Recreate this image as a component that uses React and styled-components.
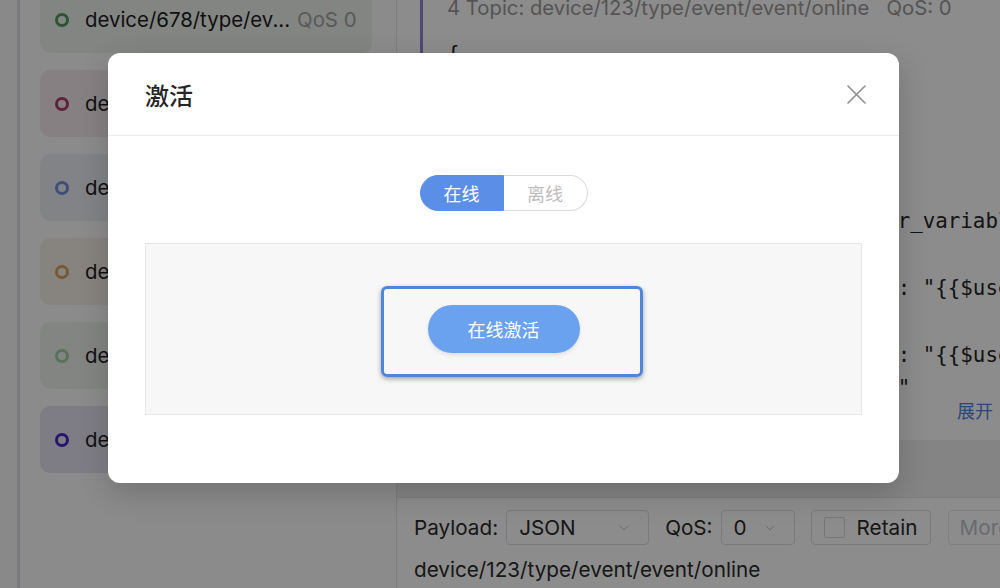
import React from "react";
import styled, { createGlobalStyle } from "styled-components";
import { ChevronDown } from "lucide-react";

const GlobalStyle = createGlobalStyle`
  html, body { margin: 0; padding: 0; }
  body {
    width: 1000px;
    height: 588px;
    overflow: hidden;
    background: #fff;
    font-family: Inter, "Noto Sans CJK SC", sans-serif;
  }
  * { box-sizing: border-box; }
`;

const Page = styled.div`
  position: relative;
  display: flex;
  width: 1000px;
  height: 588px;
  overflow: hidden;
  background: #fff;
`;

const NavStrip = styled.div`
  flex: none;
  width: 20px;
  background: #f9f9f9;
  border-right: 3px solid #dedcec;
`;

const Sidebar = styled.aside`
  flex: none;
  width: 377px;
  padding: 0 24px 0 20px;
  background: #fdfdfd;
  border-right: 1px solid #e3e3e3;
  overflow: hidden;
`;

const CardList = styled.div`
  display: flex;
  flex-direction: column;
  gap: 17px;
  margin-top: -14px;
`;

const SubCard = styled.div`
  display: flex;
  align-items: center;
  gap: 16px;
  height: 67px;
  padding-left: 15px;
  border-radius: 10px;
  background: ${(p) => p.$bg};
  white-space: nowrap;
  overflow: hidden;
`;

const Dot = styled.span`
  flex: none;
  width: 14px;
  height: 14px;
  border-radius: 50%;
  border: 3px solid ${(p) => p.$color};
`;

const SubTopic = styled.span`
  font-size: 20.4px;
  color: #1c1c1c;
`;

const SubQos = styled.span`
  margin-left: 7px;
  color: #a3a3a3;
`;

const Main = styled.main`
  flex: 1;
  display: flex;
  flex-direction: column;
  min-width: 0;
  overflow: hidden;
`;

const MessageList = styled.div`
  flex: 1;
  display: flex;
  flex-direction: column;
  min-height: 0;
`;

const MessageCard = styled.div`
  flex: none;
  height: 448px;
  margin-top: -8px;
  margin-left: 23px;
  padding-left: 24px;
  border-left: 3px solid #8f86d4;
  background: #fff;
  display: flex;
  flex-direction: column;
  overflow: hidden;
`;

const TopicLine = styled.div`
  font-size: 20.3px;
  line-height: 32px;
  color: #9a9a9a;
  white-space: pre;
`;

const Payload = styled.pre`
  margin: 14px 0 0;
  height: 349px;
  overflow: hidden;
  font-family: "DejaVu Sans Mono", "Liberation Mono", monospace;
  font-size: 20.8px;
  line-height: 33.4px;
  color: #262626;
  white-space: pre;
`;

const ExpandRow = styled.div`
  flex: 1;
  display: flex;
  justify-content: flex-end;
  align-items: flex-start;
  padding: 11px 7px 0 0;
`;

const ExpandLink = styled.span`
  font-family: "Noto Sans CJK SC", sans-serif;
  font-size: 18px;
  line-height: 24px;
  color: #4f7fe6;
`;

const ListBand = styled.div`
  flex: 1;
  background: #f1f1f1;
`;

const InputArea = styled.div`
  flex: none;
  height: 91px;
  padding: 12px 0 0 17px;
  border-top: 1px solid #e2e2e2;
  background: #fff;
`;

const ControlRow = styled.div`
  display: flex;
  align-items: center;
  height: 35px;
  white-space: nowrap;
`;

const FieldLabel = styled.span`
  font-size: 20.7px;
  color: #2a2a2a;
  margin-left: ${(p) => p.$gap || 0}px;
`;

const SelectBox = styled.div`
  flex: none;
  display: flex;
  align-items: center;
  justify-content: space-between;
  width: ${(p) => p.$w}px;
  height: 35px;
  margin-left: 8px;
  padding: 0 16px 0 12px;
  border: 1px solid #dcdfe6;
  border-radius: 4px;
  font-size: 20.7px;
  color: #2a2a2a;
  svg { color: #c0c4cc; }
`;

const CheckButton = styled.div`
  flex: none;
  display: flex;
  align-items: center;
  gap: 12px;
  width: 120px;
  height: 35px;
  margin-left: 16px;
  padding-left: 12px;
  border: 1px solid #dcdfe6;
  border-radius: 4px;
  font-size: 20.7px;
  color: #2a2a2a;
`;

const CheckSquare = styled.span`
  width: 21px;
  height: 21px;
  border: 1px solid #d6d9e0;
  border-radius: 2px;
  background: #fff;
`;

const GhostButton = styled.div`
  flex: none;
  display: flex;
  align-items: center;
  width: 90px;
  height: 35px;
  margin-left: 17px;
  padding-left: 11px;
  border: 1px solid #e4e7ed;
  border-radius: 4px;
  font-size: 20.7px;
  color: #c0c4cc;
`;

const TopicInput = styled.div`
  margin-top: 11px;
  font-size: 20.7px;
  line-height: 28px;
  color: #2a2a2a;
`;

/* modal */
const Overlay = styled.div`
  position: absolute;
  inset: 0;
  display: flex;
  align-items: flex-start;
  padding: 53px 0 0 108px;
  background: rgba(0, 0, 0, 0.45);
`;

const Modal = styled.div`
  width: 791px;
  background: #fff;
  border-radius: 12px;
  box-shadow: 0 10px 30px rgba(0, 0, 0, 0.18);
  overflow: hidden;
`;

const ModalHeader = styled.div`
  display: flex;
  align-items: center;
  justify-content: space-between;
  height: 83px;
  padding: 0 33px 0 37px;
  border-bottom: 1px solid #ececec;
`;

const ModalTitle = styled.h2`
  margin: 0;
  font-family: "Noto Sans CJK SC", sans-serif;
  font-size: 24px;
  font-weight: 500;
  color: #262626;
`;

const CloseButton = styled.button`
  display: flex;
  padding: 0;
  border: none;
  background: none;
  color: #8c8c8c;
`;

const ModalBody = styled.div`
  display: flex;
  flex-direction: column;
  align-items: center;
  padding: 39px 37px 68px;
`;

const Segmented = styled.div`
  display: flex;
  height: 36px;
  margin-bottom: 32px;
`;

const Segment = styled.div`
  display: flex;
  align-items: center;
  justify-content: center;
  width: 84px;
  height: 36px;
  font-family: "Noto Sans CJK SC", sans-serif;
  font-size: 18px;
  border: 1px solid ${(p) => (p.$active ? "#5b8fe7" : "#dadada")};
  background: ${(p) => (p.$active ? "#5b8fe7" : "#fff")};
  color: ${(p) => (p.$active ? "#fff" : "#bdbdbd")};
  border-radius: ${(p) => (p.$first ? "18px 0 0 18px" : "0 18px 18px 0")};
  ${(p) => (p.$first ? "" : "border-left: none;")}
`;

const Panel = styled.div`
  align-self: stretch;
  display: flex;
  align-items: center;
  justify-content: center;
  height: 172px;
  background: #f7f7f7;
  border: 1px solid #e7e7e7;
`;

const ActionWrap = styled.div`
  position: relative;
  display: flex;
`;

const ActivateButton = styled.button`
  width: 152px;
  height: 48px;
  border: none;
  border-radius: 24px;
  background: #6ba2ef;
  color: #fff;
  font-family: "Noto Sans CJK SC", sans-serif;
  font-size: 18px;
  box-shadow: 0 2px 4px rgba(0, 0, 0, 0.1);
`;

const Highlight = styled.span`
  position: absolute;
  left: -47px;
  right: -63px;
  top: -19px;
  bottom: -24px;
  border: 3px solid #4d87dc;
  border-radius: 6px;
  box-shadow: 0 2px 5px rgba(0, 0, 0, 0.35);
  pointer-events: none;
`;

const subs = [
  { topic: "device/678/type/ev...", color: "#4f9a5c", bg: "#eef2ee" },
  { topic: "device/123/type/ev...", color: "#b03a6b", bg: "#f5eaee" },
  { topic: "device/456/type/ev...", color: "#6f8fdc", bg: "#eceff6" },
  { topic: "device/789/type/ev...", color: "#d6a35f", bg: "#f6f0e8" },
  { topic: "device/321/type/ev...", color: "#9fd0a8", bg: "#eef3ef" },
  { topic: "device/654/type/ev...", color: "#4b23c4", bg: "#e6e4f3" },
];

const payloadLines = [
  "{",
  '  "msgId": "{{$uuid}}",',
  '  "deviceId": "123",',
  '  "type": "event",',
  '  "params": {',
  '      "userVariable": "{{$random_user_variable}}",',
  '      "ts": 1712345678,',
  '      "customPayloadVariableContent": "{{$user_variable_1}}",',
  '      "qos": 0,',
  '      "customPayloadVariableRemarks": "{{$user_variable_2}}",',
  '      "customPayloadVariableTemplate"',
].join("\n");

export default function App() {
  return (
    <>
      <GlobalStyle />
      <Page>
        <NavStrip />
        <Sidebar>
          <CardList>
            {subs.map((s) => (
              <SubCard key={s.topic} $bg={s.bg}>
                <Dot $color={s.color} />
                <SubTopic>
                  {s.topic}
                  <SubQos>QoS 0</SubQos>
                </SubTopic>
              </SubCard>
            ))}
          </CardList>
        </Sidebar>
        <Main>
          <MessageList>
            <MessageCard>
              <TopicLine>{"4 Topic: device/123/type/event/event/online   QoS: 0"}</TopicLine>
              <Payload>{payloadLines}</Payload>
              <ExpandRow>
                <ExpandLink>展开</ExpandLink>
              </ExpandRow>
            </MessageCard>
            <ListBand />
          </MessageList>
          <InputArea>
            <ControlRow>
              <FieldLabel>Payload:</FieldLabel>
              <SelectBox $w={143}>
                JSON
                <ChevronDown size={16} strokeWidth={1.5} />
              </SelectBox>
              <FieldLabel $gap={16}>QoS:</FieldLabel>
              <SelectBox $w={74}>
                0
                <ChevronDown size={16} strokeWidth={1.5} />
              </SelectBox>
              <CheckButton>
                <CheckSquare />
                Retain
              </CheckButton>
              <GhostButton>More</GhostButton>
            </ControlRow>
            <TopicInput>device/123/type/event/event/online</TopicInput>
          </InputArea>
        </Main>
        <Overlay>
          <Modal>
            <ModalHeader>
              <ModalTitle>激活</ModalTitle>
              <CloseButton aria-label="close">
                <svg width="19" height="19" viewBox="0 0 19 19" fill="none">
                  <path d="M1 1L18 18M18 1L1 18" stroke="currentColor" strokeWidth="1.6" strokeLinecap="round" />
                </svg>
              </CloseButton>
            </ModalHeader>
            <ModalBody>
              <Segmented>
                <Segment $active $first>在线</Segment>
                <Segment>离线</Segment>
              </Segmented>
              <Panel>
                <ActionWrap>
                  <ActivateButton>在线激活</ActivateButton>
                  <Highlight />
                </ActionWrap>
              </Panel>
            </ModalBody>
          </Modal>
        </Overlay>
      </Page>
    </>
  );
}
